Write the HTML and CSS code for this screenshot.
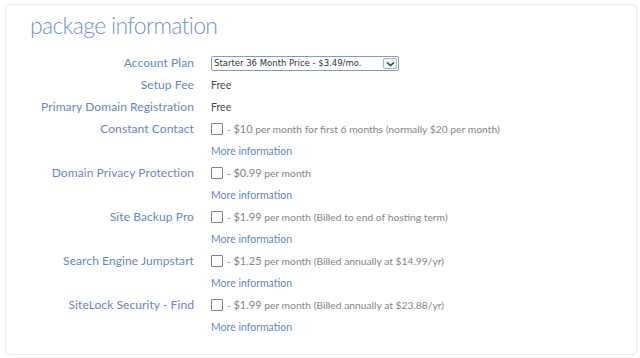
FILE: index.html
```html
<!DOCTYPE html>
<html lang="en">
<head>
    <meta charset="UTF-8">
    <title>Package Information</title>
    <link rel="stylesheet" href="styles.css">
</head>
<body>

    <div class="panel">
        <h2>package information</h2>

        <div class="form">
            <div class="label">Account Plan</div>
            <div class="value">
                <div class="select">
                    <span>Starter 36 Month Price - $3.49/mo.</span>
                    <span class="arrow">
                        <svg width="9" height="6" viewBox="0 0 9 6"><path d="M1 1.5 L4.5 4.5 L8 1.5" fill="none" stroke="#333" stroke-width="1.4"/></svg>
                    </span>
                </div>
            </div>

            <div class="label">Setup Fee</div>
            <div class="value free">Free</div>

            <div class="label">Primary Domain Registration</div>
            <div class="value free">Free</div>

            <div class="label">Constant Contact</div>
            <div class="value">
                <div class="option"><span class="box"></span><span>- <span class="price">$10</span> per month for first 6 months (normally $20 per month)</span></div>
                <a class="more" href="#">More information</a>
            </div>

            <div class="label">Domain Privacy Protection</div>
            <div class="value">
                <div class="option"><span class="box"></span><span>- <span class="price">$0.99</span> per month</span></div>
                <a class="more" href="#">More information</a>
            </div>

            <div class="label">Site Backup Pro</div>
            <div class="value">
                <div class="option"><span class="box"></span><span>- <span class="price">$1.99</span> per month (Billed to end of hosting term)</span></div>
                <a class="more" href="#">More information</a>
            </div>

            <div class="label">Search Engine Jumpstart</div>
            <div class="value">
                <div class="option"><span class="box"></span><span>- <span class="price">$1.25</span> per month (Billed annually at $14.99/yr)</span></div>
                <a class="more" href="#">More information</a>
            </div>

            <div class="label">SiteLock Security - Find</div>
            <div class="value">
                <div class="option"><span class="box"></span><span>- <span class="price">$1.99</span> per month (Billed annually at $23.88/yr)</span></div>
                <a class="more" href="#">More information</a>
            </div>
        </div>
    </div>

</body>
</html>
```

FILE: styles.css
```css
/* Reset */
* {
    margin: 0;
    padding: 0;
    box-sizing: border-box;
}

body {
    font-family: 'Lato', 'Open Sans', sans-serif;
    background-color: #fff;
    color: #444;
}

/* Panel */
.panel {
    margin: 4px 3px 0 5px;
    height: 351px;
    border: 1px solid #e2ecf7;
    border-radius: 4px;
    background-color: #fff;
}

h2 {
    font-weight: 300;
    font-size: 23px;
    color: #6f93d2;
    padding: 6px 0 0 24px;
    height: 47px;
    letter-spacing: -0.7px;
}

/* Form grid */
.form {
    display: grid;
    grid-template-columns: 188px 1fr;
    column-gap: 17px;
}

.label {
    text-align: right;
    font-size: 12px;
    line-height: 22px;
    color: #6487c8;
    font-weight: 400;
    letter-spacing: 0.08px;
}

.value {
    font-size: 11px;
    line-height: 22px;
}

.free {
    color: #4a4a4a;
    font-size: 10.5px;
}

/* Select */
.select {
    display: flex;
    align-items: center;
    justify-content: space-between;
    width: 188px;
    height: 15px;
    margin-top: 4px;
    border: 1px solid #7f9dc9;
    border-radius: 2px;
    font-family: 'DejaVu Sans', sans-serif;
    font-size: 8.5px;
    line-height: 13px;
    color: #333;
    padding-left: 2px;
}

.arrow {
    display: flex;
    align-items: center;
    justify-content: center;
    width: 14px;
    height: 11px;
    margin-right: 1px;
    border: 1px solid #a4b4cc;
    border-radius: 2px;
    background-color: #f4f4f4;
}

/* Options */
.option {
    display: flex;
    align-items: center;
    gap: 4px;
    color: #858585;
    font-size: 10.3px;
    font-weight: 400;
}

.price {
    font-size: 11px;
    color: #858585;
}

.box {
    display: inline-block;
    width: 12px;
    height: 12px;
    border: 1px solid #808080;
    border-radius: 1px;
    background-color: #fff;
}

.more {
    display: block;
    font-size: 10.5px;
    color: #6686c6;
    text-decoration: none;
    font-weight: 400;
}
```
